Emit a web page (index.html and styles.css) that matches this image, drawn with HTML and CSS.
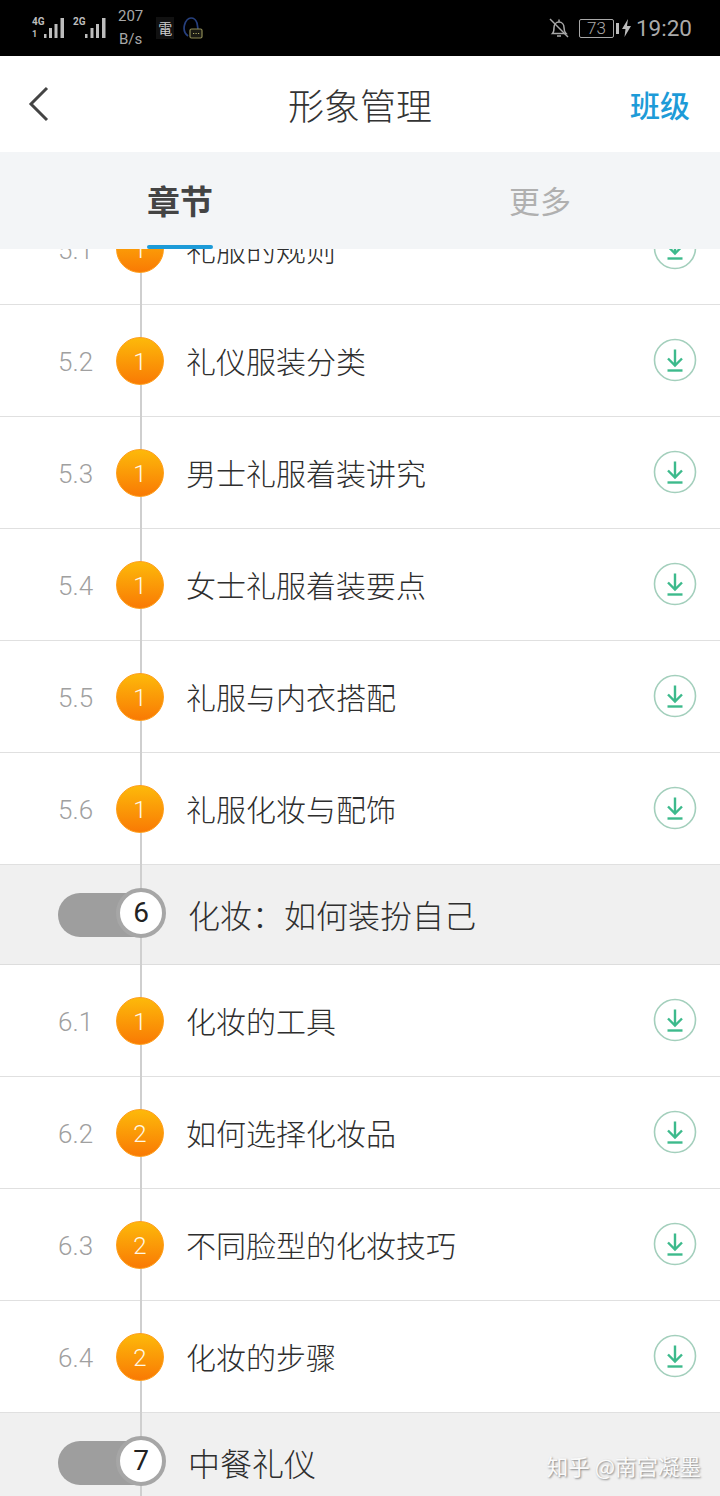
FILE: index.html
```html
<!DOCTYPE html>
<html lang="zh-CN">
<head>
  <meta charset="UTF-8">
  <meta name="viewport" content="width=device-width, initial-scale=1.0">
  <title>形象管理</title>
  <link rel="stylesheet" href="styles.css">
</head>
<body>
<svg class="defs" width="0" height="0">
  <symbol id="dl" viewBox="0 0 44 44">
    <circle cx="22" cy="22" r="20.5" fill="none" stroke="#a3cfbc" stroke-width="1.6"/>
    <path d="M22 11.500V27M15 20.500l7 7 7-7" fill="none" stroke="#3dba8c" stroke-width="2.400"/>
    <path d="M14.500 32.500h15" fill="none" stroke="#3dba8c" stroke-width="2.400"/>
  </symbol>
</svg>

<div class="app">
  <div class="status">
    <div class="status-left">
      <div class="net">
        <span class="net-label">4G</span>
        <span class="net-sub">1</span>
      </div>
      <svg class="bars" width="22" height="22" viewBox="0 0 22 22"><path d="M1 16h2.500v4H1zM6 10h3v10H6zM11.500 6h3v14h-3zM17.500 0h3.500v20h-3.500z" fill="#bdbdbd"/></svg>
      <div class="net net-two">
        <span class="net-label">2G</span>
      </div>
      <svg class="bars" width="22" height="22" viewBox="0 0 22 22"><path d="M1 16h2.500v4H1zM6.500 10h3v10h-3zM12 6h3v14h-3zM18 0h3.500v20H18z" fill="#bdbdbd"/></svg>
      <div class="speed"><span>207</span><span>B/s</span></div>
      <div class="chip">電</div>
      <svg class="bell-chat" width="20" height="24" viewBox="0 0 20 24">
        <path d="M5 19C1 16 0.500 12 1.500 8 3 3 6 1 8 1c3 0 5 2 6 5l1 6" fill="none" stroke="#27407e" stroke-width="1.700"/>
        <rect x="7" y="12" width="12" height="9" rx="1.500" fill="#1a1a14" stroke="#8d8a55" stroke-width="1.200"/>
        <path d="M10 16.500h1.200M12.500 16.500h1.200M15 16.500h1.200" stroke="#b3ae6a" stroke-width="1.200"/>
      </svg>
    </div>
    <div class="status-right">
      <svg class="mute" width="20" height="22" viewBox="0 0 20 22">
        <path d="M3.500 16.500c1.500-1.500 1.500-3 1.500-6 0-3 2-5.500 5-5.500s5 2.500 5 5.500c0 3 .5 4.500 2 6zM10 2.500V5M8 19h4" fill="none" stroke="#a8a8a8" stroke-width="1.500"/>
        <path d="M1 2l18 18" stroke="#a8a8a8" stroke-width="1.500"/>
      </svg>
      <div class="battery"><span class="battery-box">73</span><span class="battery-tip"></span></div>
      <svg class="bolt" width="9" height="18" viewBox="0 0 9 18"><path d="M6 0L0 10h3.500L2.500 18 9 7H5z" fill="#bdbdbd"/></svg>
      <span class="clock">19:20</span>
    </div>
  </div>

  <div class="topbar">
    <svg class="back" width="22" height="36" viewBox="0 0 22 36"><path d="M19 2L3 18l16 16" fill="none" stroke="#444" stroke-width="3"/></svg>
    <h1>形象管理</h1>
    <a class="topbar-link">班级</a>
  </div>

  <div class="tabs">
    <div class="tab active">章节</div>
    <div class="tab">更多</div>
  </div>

  <div class="list">
    <div class="row"><span class="num">5.1</span><span class="badge">1</span><span class="title">礼服的规则</span><svg class="dl"><use href="#dl"/></svg></div>
    <div class="row"><span class="num">5.2</span><span class="badge">1</span><span class="title">礼仪服装分类</span><svg class="dl"><use href="#dl"/></svg></div>
    <div class="row"><span class="num">5.3</span><span class="badge">1</span><span class="title">男士礼服着装讲究</span><svg class="dl"><use href="#dl"/></svg></div>
    <div class="row"><span class="num">5.4</span><span class="badge">1</span><span class="title">女士礼服着装要点</span><svg class="dl"><use href="#dl"/></svg></div>
    <div class="row"><span class="num">5.5</span><span class="badge">1</span><span class="title">礼服与内衣搭配</span><svg class="dl"><use href="#dl"/></svg></div>
    <div class="row"><span class="num">5.6</span><span class="badge">1</span><span class="title">礼服化妆与配饰</span><svg class="dl"><use href="#dl"/></svg></div>
    <div class="section">
      <div class="pill"><span class="pill-num">6</span></div>
      <span class="section-title">化妆：如何装扮自己</span>
    </div>
    <div class="row"><span class="num">6.1</span><span class="badge">1</span><span class="title">化妆的工具</span><svg class="dl"><use href="#dl"/></svg></div>
    <div class="row"><span class="num">6.2</span><span class="badge">2</span><span class="title">如何选择化妆品</span><svg class="dl"><use href="#dl"/></svg></div>
    <div class="row"><span class="num">6.3</span><span class="badge">2</span><span class="title">不同脸型的化妆技巧</span><svg class="dl"><use href="#dl"/></svg></div>
    <div class="row"><span class="num">6.4</span><span class="badge">2</span><span class="title">化妆的步骤</span><svg class="dl"><use href="#dl"/></svg></div>
    <div class="section">
      <div class="pill"><span class="pill-num">7</span></div>
      <span class="section-title">中餐礼仪</span>
    </div>
  </div>

  <div class="watermark">知乎 @南宫凝墨</div>
</div>
</body>
</html>
```

FILE: styles.css
```css
* {
  margin: 0;
  padding: 0;
  box-sizing: border-box;
}

html, body {
  width: 720px;
  height: 1496px;
  overflow: hidden;
  background: #fff;
  font-family: "Noto Sans CJK SC", "Noto Sans", sans-serif;
  color: #444;
}

.defs {
  position: absolute;
}

.app {
  position: relative;
  width: 720px;
  height: 1496px;
  overflow: hidden;
}

/* status bar */
.status {
  height: 56px;
  background: #000;
  color: #aaa;
  display: flex;
  align-items: center;
  justify-content: space-between;
  padding: 0 28px 0 32px;
  font-family: Roboto, sans-serif;
}

.status-left, .status-right {
  display: flex;
  align-items: center;
}

.net {
  width: 11px;
  height: 26px;
  display: flex;
  flex-direction: column;
  font-size: 10px;
  line-height: 11px;
  font-weight: 700;
  color: #bdbdbd;
  padding-top: 1px;
}

.net-sub {
  font-size: 9px;
  margin-top: 2px;
}

.net-two {
  margin-left: 8px;
}

.bars {
  margin-top: 2px;
}

.speed {
  display: flex;
  flex-direction: column;
  align-items: center;
  font-size: 15px;
  line-height: 23px;
  margin-left: 12px;
  color: #a8a8a8;
}

.chip {
  width: 18px;
  height: 22px;
  margin-left: 13px;
  background: #111;
  color: #d0d0d0;
  font-size: 14px;
  line-height: 22px;
  text-align: center;
  font-family: "Noto Sans CJK TC", sans-serif;
}

.bell-chat {
  margin-left: 9px;
  margin-top: 2px;
}

.mute {
  margin-top: -1px;
}

.battery {
  display: flex;
  align-items: center;
  margin-left: 10px;
}

.battery-box {
  width: 35px;
  height: 19px;
  border: 1px solid #a8a8a8;
  border-radius: 2px;
  font-size: 17px;
  line-height: 17px;
  text-align: center;
  font-weight: 300;
}

.battery-tip {
  width: 3px;
  height: 11px;
  margin-left: 2px;
  background: #bdbdbd;
}

.bolt {
  margin-left: 3px;
}

.clock {
  font-size: 22.500px;
  margin-left: 5px;
  color: #aaa;
}

/* header */
.topbar {
  height: 96px;
  background: #fff;
  display: flex;
  align-items: center;
  justify-content: space-between;
  padding: 0 30px 0 28px;
  position: relative;
}

.topbar h1 {
  font-size: 36px;
  font-weight: 300;
  color: #333;
  position: absolute;
  left: 0;
  right: 0;
  text-align: center;
  line-height: 100px;
}

.topbar-link {
  font-size: 30px;
  font-weight: 500;
  color: #1d9bd8;
  position: relative;
}

/* tabs */
.tabs {
  height: 97px;
  background: #f3f5f7;
  display: flex;
  position: relative;
  z-index: 5;
}

.tab {
  width: 360px;
  text-align: center;
  font-size: 31px;
  line-height: 96px;
  color: #b0b0b0;
}

.tab.active {
  color: #444;
  font-size: 33px;
  font-weight: 700;
  position: relative;
}

.tab.active::after {
  content: "";
  position: absolute;
  left: 147px;
  bottom: 0;
  width: 66px;
  height: 4px;
  border-radius: 2px;
  background: #1d9bd8;
}

/* chapter list */
.list {
  position: relative;
  margin-top: -56px;
}

.list::before {
  content: "";
  position: absolute;
  left: 140px;
  top: 0;
  bottom: 0;
  width: 2px;
  background: #cfcfcf;
  z-index: 1;
}

.row {
  height: 112px;
  display: flex;
  align-items: center;
  padding: 0 23px 0 58px;
  border-bottom: 1px solid #e0e0e0;
  background: #fff;
}

.num {
  width: 58px;
  padding-top: 2px;
  font-family: Roboto, sans-serif;
  font-size: 26px;
  font-weight: 300;
  color: #a0a0a0;
}

.badge {
  width: 48px;
  height: 48px;
  border-radius: 50%;
  background: linear-gradient(#fdb90a, #f97a04);
  border: 1px solid #ff9f1c;
  color: #fff8e6;
  font-family: Roboto, sans-serif;
  font-size: 24px;
  font-weight: 300;
  line-height: 48px;
  text-align: center;
  position: relative;
  z-index: 2;
}

.title {
  margin-left: 22px;
  padding-bottom: 2px;
  font-size: 30px;
  font-weight: 300;
  color: #2e2e2e;
  flex: 1;
}

.dl {
  width: 44px;
  height: 44px;
  margin-bottom: 2px;
}

.section {
  height: 100px;
  display: flex;
  align-items: center;
  padding-left: 58px;
  background: #f0f0f0;
  border-bottom: 1px solid #ddd;
}

.pill {
  width: 83px;
  height: 44px;
  border-radius: 22px 0 0 22px;
  background: #9e9e9e;
  position: relative;
  z-index: 2;
}

.pill-num {
  position: absolute;
  left: 58px;
  top: -5px;
  width: 50px;
  height: 50px;
  border-radius: 50%;
  border: 4px solid #a6a6a6;
  background: #fff;
  color: #222;
  font-family: Roboto, sans-serif;
  font-size: 28px;
  line-height: 42px;
  text-align: center;
}

.section-title {
  margin-left: 47px;
  padding-bottom: 2px;
  font-size: 32px;
  font-weight: 300;
  color: #2e2e2e;
}

.watermark {
  position: absolute;
  right: 19px;
  bottom: 15px;
  font-size: 21.500px;
  line-height: 30px;
  color: #fafafa;
  text-shadow: 1px 1px 2px rgba(0, 0, 0, 0.45);
  z-index: 6;
}
```
